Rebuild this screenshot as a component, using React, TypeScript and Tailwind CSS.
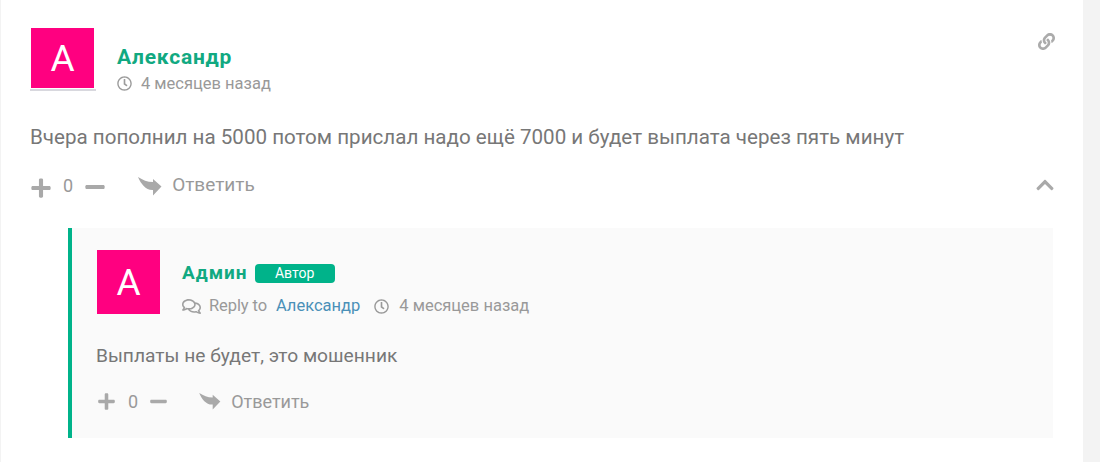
import { FaPlus, FaMinus, FaLink, FaChevronUp, FaRegClock, FaRegComments } from "react-icons/fa";

function ReplyArrow({ className }: { className: string }) {
  return (
    <svg viewBox="0 0 24 20" className={className} fill="currentColor" aria-hidden="true">
      <path d="M0 1 C5 4 9 6 15 6 L15 3 L23.5 10.5 L15 19.5 L15 14 C8 14.5 3 8 0 1 Z" />
    </svg>
  );
}

export default function App() {
  return (
    <div className="h-[462px] w-[1100px] overflow-hidden bg-[#f3f3f3] pl-px pr-[17px] font-['Roboto',sans-serif]">
      <div className="relative h-full bg-white pl-[29px] pr-[30px] pt-[28px] text-[#777777]">
        <FaLink className="absolute right-[28px] top-[33px] h-[17px] w-[17px] text-[#ababab]" />
        <div className="flex items-start">
          <div className="h-[63px] w-[66px] border-b-2 border-[#d8d8de]">
            <div className="ml-px flex h-[60px] w-[63px] items-center justify-center bg-[#ff0080] text-[37px] font-normal leading-none text-white">A</div>
          </div>
          <div className="ml-[21px] pt-[17px]">
            <div className="text-[21px] font-bold leading-[25px] tracking-[0.75px] text-[#11a981]">Александр</div>
            <div className="mt-px flex items-center text-[16.5px] leading-[25px] text-[#999999]">
              <FaRegClock className="mr-[9px] h-[15px] w-[15px] text-[#9c9c9c]" />4 месяцев назад
            </div>
          </div>
        </div>
        <p className="mt-[27px] text-[20.6px] leading-[28px] text-[#777777]">Вчера пополнил на 5000 потом прислал надо ещё 7000 и будет выплата через пять минут</p>
        <div className="mt-[22px] flex h-[24px] items-center text-[#a9a9a9]">
          <FaPlus className="mt-[6px] h-[22px] w-[22px]" />
          <span className="ml-[11px] text-[18px] text-[#999999]">0</span>
          <FaMinus className="ml-[11px] mt-[4px] h-[22px] w-[22px]" />
          <ReplyArrow className="ml-[32px] mt-[1px] h-[20px] w-[24px]" />
          <span className="ml-[10px] text-[19px] text-[#999999]">Ответить</span>
          <FaChevronUp className="ml-auto mr-[-2px] h-[20px] w-[20px]" />
        </div>
        <div className="ml-[38px] mr-0 mt-[31px] h-[210px] border-l-4 border-[#00b38a] bg-[#fafafa] pl-[25px] pt-[22px]">
          <div className="flex items-start">
            <div className="flex h-[64px] w-[63px] items-center justify-center bg-[#ff0080] text-[37px] font-normal leading-none text-white">A</div>
            <div className="ml-[22px] pt-[11px]">
              <div className="flex items-center">
                <span className="text-[19px] font-bold leading-[24px] tracking-[1px] text-[#11a981]">Админ</span>
                <span className="ml-[7px] flex h-[19px] w-[80px] items-center justify-center rounded-[4px] bg-[#00b38a] text-[14px] text-white">Автор</span>
              </div>
              <div className="mt-[9px] flex items-center text-[16.5px] leading-[24px] text-[#999999]">
                <FaRegComments className="mr-[8px] h-[19px] w-[19px] text-[#a0a0a0]" />
                <span className="tracking-[-0.1px]">Reply to</span>
                <span className="ml-[9px] text-[#4a90b8]">Александр</span>
                <FaRegClock className="ml-[14px] mr-[10px] h-[15px] w-[15px]" />4 месяцев назад
              </div>
            </div>
          </div>
          <p className="-ml-px mt-[24px] text-[19.2px] leading-[28px] text-[#777777]">Выплаты не будет, это мошенник</p>
          <div className="mt-[19px] flex h-[24px] items-center text-[#a9a9a9]">
            <FaPlus className="mt-[1px] h-[19px] w-[19px]" />
            <span className="ml-[12px] text-[18px] text-[#999999]">0</span>
            <FaMinus className="ml-[11px] h-[19px] w-[19px]" />
            <ReplyArrow className="ml-[31px] h-[18px] w-[22px]" />
            <span className="ml-[10px] text-[18px] text-[#999999]">Ответить</span>
          </div>
        </div>
      </div>
    </div>
  );
}
